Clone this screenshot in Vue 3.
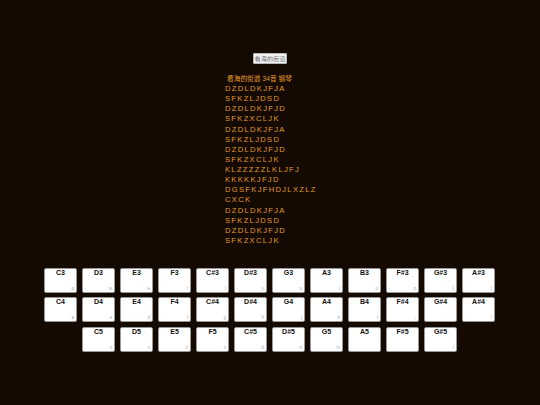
<script setup>
const lines = [
  'DZDLDKJFJA', 'SFKZLJDSD', 'DZDLDKJFJD', 'SFKZXCLJK',
  'DZDLDKJFJA', 'SFKZLJDSD', 'DZDLDKJFJD', 'SFKZXCLJK',
  'KLZZZZZLKLJFJ', 'KKKKKJFJD', 'DGSFKJFHDJLXZLZ', 'CXCK',
  'DZDLDKJFJA', 'SFKZLJDSD', 'DZDLDKJFJD', 'SFKZXCLJK'
]
const rows = [
  { cls: '', keys: [['C3','q'],['D3','w'],['E3','e'],['F3','r'],['C#3','t'],['D#3','y'],['G3','u'],['A3','i'],['B3','o'],['F#3','p'],['G#3','['],['A#3',']']] },
  { cls: '', keys: [['C4','a'],['D4','s'],['E4','d'],['F4','f'],['C#4','g'],['D#4','h'],['G4','j'],['A4','k'],['B4','l'],['F#4',';'],['G#4',"'"],['A#4','\\']] },
  { cls: 'indent', keys: [['C5','z'],['D5','x'],['E5','c'],['F5','v'],['C#5','b'],['D#5','n'],['G5','m'],['A5',','],['F#5','.'],['G#5','/']] }
]
</script>

<template>
  <main class="page">
    <button class="title-btn">看海的街道</button>
    <section class="score">
      <p class="head">看海的街道 34音 钢琴</p>
      <p v-for="(l, i) in lines" :key="i" class="line">{{ l }}</p>
    </section>
    <section class="keyboard">
      <div v-for="(r, i) in rows" :key="i" class="row" :class="r.cls">
        <div v-for="k in r.keys" :key="k[0]" class="key">
          <span class="note">{{ k[0] }}</span>
          <span class="hint">{{ k[1] }}</span>
        </div>
      </div>
    </section>
  </main>
</template>

<style>
html, body { margin: 0; background: #140a02; }
</style>

<style scoped>
.page {
  width: 540px;
  height: 405px;
  background: #140a02;
  box-sizing: border-box;
  padding-top: 53px;
  display: flex;
  flex-direction: column;
  align-items: center;
  overflow: hidden;
  font-family: "Liberation Sans", "Noto Sans CJK SC", sans-serif;
}
.title-btn {
  width: 34px;
  height: 11px;
  padding: 0;
  border: 1px solid #b5b5b5;
  border-radius: 1px;
  background: #f4f4f4;
  color: #777;
  font-family: inherit;
  font-size: 6.2px;
  line-height: 9px;
  white-space: nowrap;
}
.score {
  align-self: flex-start;
  margin: 10px 0 0 225px;
  color: #e09a28;
}
.score p { margin: 0; }
.head {
  font-size: 6.6px;
  line-height: 10px;
  padding-left: 2px;
  letter-spacing: 0.1px;
  white-space: nowrap;
}
.line {
  font-size: 7.6px;
  line-height: 10.13px;
  letter-spacing: 1.3px;
  white-space: nowrap;
}
.keyboard {
  align-self: flex-start;
  margin: 21.5px 0 0 44px;
  display: flex;
  flex-direction: column;
  gap: 4.5px;
}
.row { display: flex; gap: 5px; }
.indent { padding-left: 38px; }
.key {
  width: 33px;
  height: 25px;
  box-sizing: border-box;
  background: #fff;
  border: 1px solid #999;
  border-radius: 2px;
  position: relative;
  text-align: center;
}
.note {
  display: block;
  font-size: 7px;
  line-height: 8px;
  font-weight: 700;
  color: #111;
}
.hint {
  position: absolute;
  right: 2px;
  bottom: 1px;
  font-size: 4.5px;
  line-height: 5px;
  color: #aaa;
}
</style>
